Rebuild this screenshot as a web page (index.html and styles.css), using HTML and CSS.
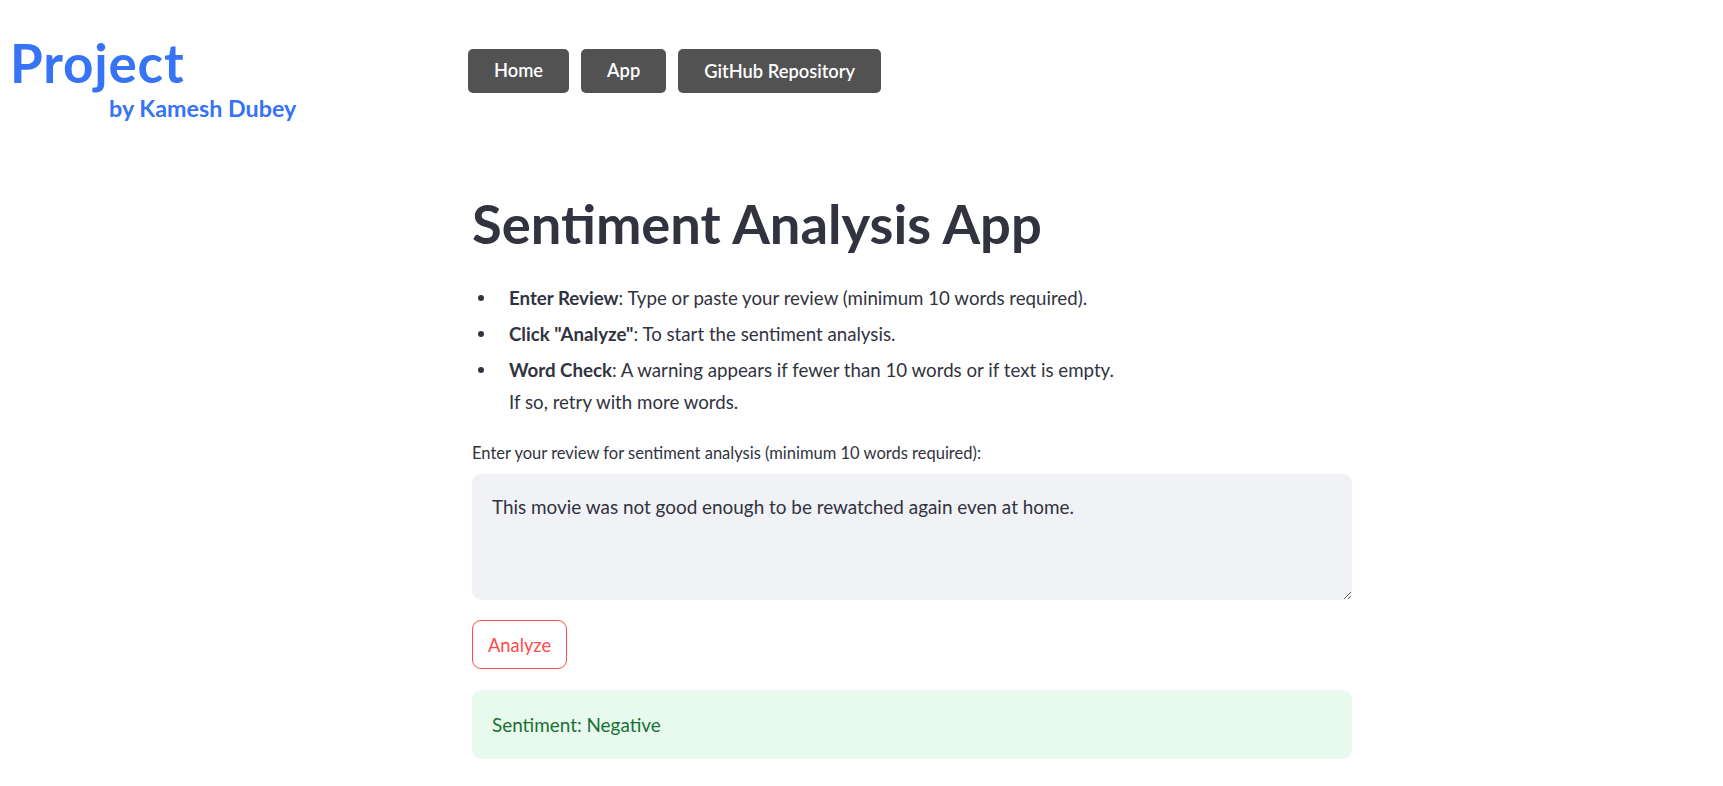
FILE: index.html
```html
<!DOCTYPE html>
<html lang="en">
<head>
<meta charset="utf-8">
<title>Sentiment Analysis App</title>
<link rel="stylesheet" href="styles.css">
</head>
<body>
<header class="topbar">
  <div class="brand">
    <div class="brand-title">Project</div>
    <div class="brand-sub">by Kamesh Dubey</div>
  </div>
  <nav class="nav">
    <a class="nav-btn" href="#">Home</a>
    <a class="nav-btn" href="#">App</a>
    <a class="nav-btn nav-btn--wide" href="#">GitHub Repository</a>
  </nav>
</header>

<main class="content">
  <h1 class="title">Sentiment Analysis App</h1>
  <ul class="steps">
    <li class="step"><span class="dot"></span><div class="step-text"><strong>Enter Review</strong>: Type or paste your review (minimum 10 words required).</div></li>
    <li class="step"><span class="dot"></span><div class="step-text"><strong>Click "Analyze"</strong>: To start the sentiment analysis.</div></li>
    <li class="step"><span class="dot"></span><div class="step-text"><strong>Word Check</strong>: A warning appears if fewer than 10 words or if text is empty.<br>If so, retry with more words.</div></li>
  </ul>

  <label class="field-label" for="review">Enter your review for sentiment analysis (minimum 10 words required):</label>
  <textarea id="review" class="review">This movie was not good enough to be rewatched again even at home.</textarea>

  <div class="actions">
    <button class="analyze-btn" type="button">Analyze</button>
  </div>

  <div class="alert-success">Sentiment: Negative</div>
</main>
</body>
</html>
```
FILE: styles.css
```css
* { box-sizing: border-box; }

html, body {
  margin: 0;
  padding: 0;
  background: #ffffff;
}

body {
  font-family: "Lato", "Noto Sans", sans-serif;
  color: #31333f;
}

/* ---------- header ---------- */
.topbar {
  display: flex;
  align-items: flex-start;
  padding: 31px 0 0 10px;
  height: 124px;
}

.brand {
  width: 458px;
  flex: none;
  color: #3673f5;
  font-weight: 700;
}

.brand-title {
  font-size: 53px;
  line-height: 63px;
  letter-spacing: 0.8px;
}

.brand-sub {
  font-size: 23.3px;
  line-height: 28px;
  padding-left: 99px;
  margin-top: 0;
}

.nav {
  display: flex;
  gap: 12px;
  margin-top: 18px;
}

.nav-btn {
  display: block;
  height: 44px;
  padding: 9px 26px 11px;
  background: #525252;
  color: #ffffff;
  border-radius: 5px;
  font-size: 18.3px;
  font-weight: 600;
  line-height: 24px;
  text-decoration: none;
}

.nav-btn--wide {
  padding-top: 10px;
  padding-bottom: 10px;
}

/* ---------- content ---------- */
.content {
  margin-left: 472px;
  width: 880px;
  padding-top: 67px;
}

.title {
  margin: 0;
  font-size: 54.3px;
  line-height: 64px;
  font-weight: 700;
  color: #31333f;
}

.steps {
  list-style: none;
  margin: 27px 0 0;
  padding: 0;
  font-size: 18.7px;
  line-height: 32px;
}

.step {
  display: grid;
  grid-template-columns: 37px 1fr;
  margin-bottom: 4px;
}

.dot {
  width: 6px;
  height: 6px;
  margin: 13px 0 0 6px;
  border-radius: 50%;
  background: #31333f;
}

.step-text strong {
  font-weight: 700;
}

.field-label {
  display: block;
  margin-top: 23px;
  font-size: 16.5px;
  line-height: 25px;
  color: #31333f;
}

.review {
  display: block;
  width: 880px;
  height: 126px;
  margin-top: 8px;
  padding: 18px 20px;
  border: none;
  border-radius: 9px;
  background: #f0f2f6;
  color: #31333f;
  font-family: "Lato", "Noto Sans", sans-serif;
  font-size: 18.9px;
  line-height: 30px;
  resize: vertical;
  outline: none;
}

.actions {
  display: flex;
  margin-top: 20px;
}

.analyze-btn {
  height: 49px;
  padding: 10px 15px 8px;
  border: 1px solid #ff4b4b;
  border-radius: 9px;
  background: #ffffff;
  color: #ff4b4b;
  font-family: "Lato", "Noto Sans", sans-serif;
  font-size: 18.3px;
  line-height: 29px;
}

.alert-success {
  margin-top: 21px;
  height: 69px;
  padding: 20px 20px;
  border-radius: 9px;
  background: #e8f9ee;
  color: #177233;
  font-size: 18.9px;
  line-height: 29px;
}
```
